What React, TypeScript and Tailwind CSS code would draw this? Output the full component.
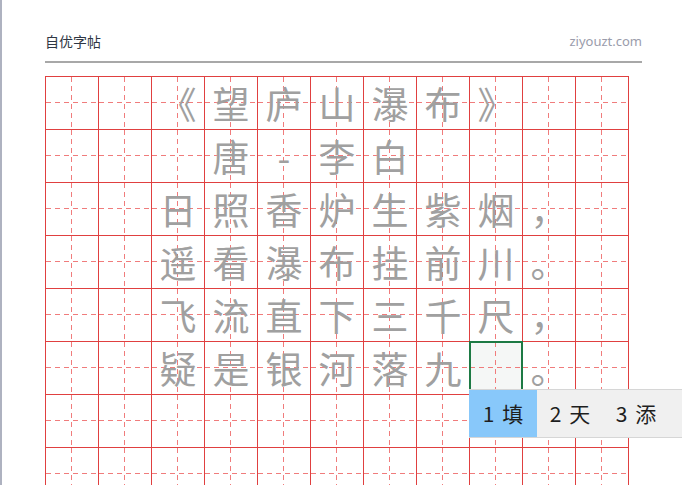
import React from "react";

const ROWS: string[][] = [
  ["", "", "《", "望", "庐", "山", "瀑", "布", "》", "", ""],
  ["", "", "", "唐", "-", "李", "白", "", "", "", ""],
  ["", "", "日", "照", "香", "炉", "生", "紫", "烟", "，", ""],
  ["", "", "遥", "看", "瀑", "布", "挂", "前", "川", "。", ""],
  ["", "", "飞", "流", "直", "下", "三", "千", "尺", "，", ""],
  ["", "", "疑", "是", "银", "河", "落", "九", "", "。", ""],
  ["", "", "", "", "", "", "", "", "", "", ""],
  ["", "", "", "", "", "", "", "", "", "", ""],
];

const CURSOR = { row: 5, col: 8 };

const cjk = { fontFamily: '"Noto Sans CJK SC", "Noto Sans", sans-serif' };

function Cell({ ch, active }: { ch: string; active: boolean }) {
  return (
    <div
      className={`relative w-[53px] h-[53px] border-r border-b border-[#e04040] flex items-center justify-center ${
        active ? "bg-[#f5f7f6]" : ""
      }`}
    >
      <svg className="absolute inset-0 w-full h-full" width="52" height="52">
        <line x1="0" y1="25.5" x2="52" y2="25.5" stroke="#f07c7c" strokeWidth="1" strokeDasharray="5 4" />
        <line x1="25.5" y1="0" x2="25.5" y2="52" stroke="#f07c7c" strokeWidth="1" strokeDasharray="5 4" />
      </svg>
      {ch && (
        <span className="relative text-[37px] leading-none font-normal text-[#a0a0a0]" style={cjk}>
          {ch}
        </span>
      )}
      {active && <div className="absolute -left-px -top-px w-[54px] h-[54px] border-2 border-[#1d7a44] z-10" />}
    </div>
  );
}

export default function App() {
  return (
    <div className="relative flex w-[682px] h-[485px] overflow-hidden bg-white">
      <div className="w-[2px] shrink-0 bg-[#aeb2c0]" />
      <div className="flex flex-col pl-[43px] pr-[40px] flex-1">
        <div className="shrink-0 flex items-center justify-between h-[61px] pt-[20px]">
          <span className="text-[14px] leading-[20px] text-[#2f3744]" style={cjk}>
            自优字帖
          </span>
          <span className="text-[13px] leading-[20px] text-[#9a9cab]" style={{ fontFamily: '"Noto Sans", sans-serif' }}>
            ziyouzt.com
          </span>
        </div>
        <div className="shrink-0 h-[2px] bg-[#a8a8a8]" />
        <div className="shrink-0 mt-[13px] grid grid-cols-[repeat(11,53px)] w-max border-l border-t border-[#e04040]">
          {ROWS.map((row, r) =>
            row.map((ch, c) => (
              <Cell key={`${r}-${c}`} ch={ch} active={r === CURSOR.row && c === CURSOR.col} />
            ))
          )}
        </div>
      </div>

      <div
        className="absolute left-[469px] top-[389px] right-0 h-[49px] flex bg-[#f0f0f0] border-t border-b border-[#d6d6d6] z-20 text-[21px] text-[#1e1e1e]"
        style={cjk}
      >
        <div className="w-[68px] flex items-center justify-center gap-[8px] bg-[#88c8fa]">
          <span>1</span>
          <span>填</span>
        </div>
        <div className="w-[66px] flex items-center justify-center gap-[8px]">
          <span>2</span>
          <span>天</span>
        </div>
        <div className="w-[66px] flex items-center justify-center gap-[8px]">
          <span>3</span>
          <span>添</span>
        </div>
      </div>
    </div>
  );
}
